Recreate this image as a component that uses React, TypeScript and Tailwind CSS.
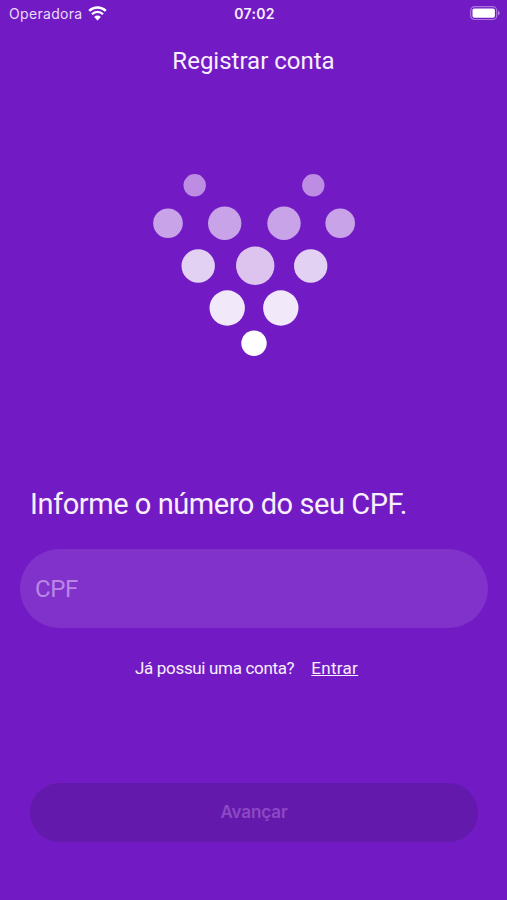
interface Dot {
  x: number
  y: number
  r: number
  color: string
}

const DOTS: Dot[] = [
  { x: 44.7, y: 15.3, r: 11.2, color: "#bd8ce3" },
  { x: 163.3, y: 15.3, r: 11.2, color: "#bd8ce3" },
  { x: 18, y: 53.3, r: 14.8, color: "#c8a3e8" },
  { x: 74.7, y: 53.3, r: 16.7, color: "#c8a3e8" },
  { x: 134, y: 53.3, r: 16.7, color: "#c8a3e8" },
  { x: 190.2, y: 53.3, r: 14.8, color: "#c8a3e8" },
  { x: 48.2, y: 96, r: 16.7, color: "#e3d1f3" },
  { x: 105.2, y: 95.7, r: 19.2, color: "#dcc4ef" },
  { x: 160.7, y: 96, r: 16.7, color: "#e3d1f3" },
  { x: 77.2, y: 138, r: 17.7, color: "#f1e8f9" },
  { x: 130.8, y: 138, r: 17.7, color: "#f1e8f9" },
  { x: 104, y: 173.3, r: 12.7, color: "#ffffff" },
]

function WifiIcon() {
  return (
    <svg width="19" height="15" viewBox="0 0 19 15" fill="none">
      <path d="M1.2 4.9a12 12 0 0 1 16.6 0" stroke="white" strokeWidth="2.5" />
      <path d="M4 8.2a7.8 7.8 0 0 1 11 0" stroke="white" strokeWidth="2.3" />
      <path d="M6.2 11a4.6 4.6 0 0 1 6.6 0L9.5 14.4Z" fill="white" />
    </svg>
  )
}

function BatteryIcon() {
  return (
    <svg width="30" height="15" viewBox="0 0 30 15" fill="none">
      <rect x="0.7" y="0.7" width="26" height="12.8" rx="3.8" stroke="white" strokeOpacity="0.4" strokeWidth="1.2" />
      <rect x="2.5" y="2.5" width="22.4" height="9.2" rx="1.8" fill="white" />
      <path d="M28 4.8v4.6c1-.4 1.7-1.3 1.7-2.3S29 5.2 28 4.8Z" fill="white" fillOpacity="0.45" />
    </svg>
  )
}

function StatusBar() {
  return (
    <header className="grid h-[27px] grid-cols-3 items-center pl-[9px] pr-[7px] font-['Inter',sans-serif]">
      <div className="flex items-center gap-[5px]">
        <span className="text-[14px] tracking-[0.32px] text-[#eadbf7]">Operadora</span>
        <WifiIcon />
      </div>
      <span className="text-center text-[14px] font-semibold tracking-[0.3px]">07:02</span>
      <div className="flex justify-end">
        <BatteryIcon />
      </div>
    </header>
  )
}

function Logo() {
  return (
    <svg width="208" height="190" viewBox="0 0 208 190">
      {DOTS.map((dot) => (
        <circle key={`${dot.x}-${dot.y}`} cx={dot.x} cy={dot.y} r={dot.r} fill={dot.color} />
      ))}
    </svg>
  )
}

export default function App() {
  return (
    <main className="flex h-[900px] w-[507px] flex-col overflow-hidden bg-[#721bc4] font-['Roboto',sans-serif] text-[#f8effd]">
      <StatusBar />
      <h1 className="mt-[18px] text-center text-[24px] leading-8">Registrar conta</h1>
      <div className="mt-[93px] flex pl-[150px]">
        <Logo />
      </div>
      <h2 className="mt-[124px] pl-[30px] text-[29px] leading-10 tracking-[-0.44px]">Informe o número do seu CPF.</h2>
      <div className="ml-5 mt-[25px] flex h-[79px] w-[468px] shrink-0 rounded-full bg-[#8132cb]">
        <input
          placeholder="CPF"
          className="w-full bg-transparent px-[15px] pt-px text-[24px] tracking-[-0.4px] outline-none placeholder:text-[#bb86e4]"
        />
      </div>
      <div className="mt-7 flex gap-[17px] pl-[135px] text-[17px] leading-6">
        <span className="tracking-[-0.33px]">Já possui uma conta?</span>
        <a href="#" className="tracking-[0.3px] underline decoration-1 underline-offset-1">
          Entrar
        </a>
      </div>
      <button
        disabled
        className="ml-[30px] mt-[103px] h-[59px] w-[448px] shrink-0 rounded-full bg-[#6419ad] font-['Inter',sans-serif] text-[17px] font-semibold tracking-[-0.1px] text-[#8c49c4]"
      >
        Avançar
      </button>
    </main>
  )
}
